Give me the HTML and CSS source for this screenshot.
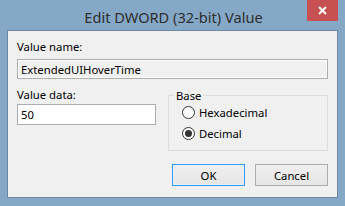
FILE: index.html
```html
<!DOCTYPE html>
<html lang="en">
<head>
    <meta charset="UTF-8">
    <title>Edit DWORD (32-bit) Value</title>
    <link rel="stylesheet" href="styles.css">
</head>
<body>
    <div class="window">
        <div class="titlebar">
            <div class="title">Edit DWORD (32-bit) Value</div>
            <div class="close">
                <svg width="9" height="9" viewBox="0 0 9 9">
                    <path d="M1 1 L8 8 M8 1 L1 8" stroke="#ffffff" stroke-width="2" fill="none"/>
                </svg>
            </div>
        </div>

        <div class="client">
            <label class="label" for="valueName">Value name:</label>
            <input type="text" id="valueName" class="textbox disabled" value="ExtendedUIHoverTime" disabled>

            <div class="row">
                <div class="data">
                    <label class="label" for="valueData">Value data:</label>
                    <input type="text" id="valueData" class="textbox" value="50">
                </div>
                <fieldset class="group">
                    <legend>Base</legend>
                    <label class="radio"><span class="dot"></span>Hexadecimal</label>
                    <label class="radio"><span class="dot checked"></span>Decimal</label>
                </fieldset>
            </div>

            <div class="buttons">
                <button class="btn default">OK</button>
                <button class="btn">Cancel</button>
            </div>
        </div>
    </div>
</body>
</html>
```

FILE: styles.css
```css
html, body {
    margin: 0;
    padding: 0;
}

body {
    width: 345px;
    height: 206px;
    overflow: hidden;
    font-family: "Noto Sans", "Open Sans", sans-serif;
    font-size: 11.3px;
    color: #000000;
}

.window {
    width: 345px;
    height: 206px;
    background: #85a8c6;
    box-sizing: border-box;
    border: 1px solid #85a8c6;
}

.titlebar {
    height: 29px;
    position: relative;
}

.title {
    text-align: center;
    font-size: 14.6px;
    color: #2e2e2e;
    padding-top: 6px;
    padding-left: 2px;
}

.close {
    position: absolute;
    top: -1px;
    right: 6px;
    width: 31px;
    height: 21px;
    background: #c75050;
    display: flex;
    align-items: center;
    justify-content: center;
}

.client {
    margin-left: 6px;
    width: 331px;
    height: 168px;
    box-sizing: border-box;
    border: 1px solid #6c89a3;
    background: #f0f0f0;
    padding: 8px 9px 0 9px;
}

.label {
    display: block;
    height: 15px;
    line-height: 15px;
}

.textbox {
    display: block;
    box-sizing: border-box;
    margin: 5px 0 0 0;
    padding: 0 3px;
    font-family: inherit;
    font-size: 11.3px;
    color: #000000;
    background: #ffffff;
    border: 1px solid #abadb3;
    outline: none;
}

#valueName {
    width: 311px;
    height: 20px;
}

.textbox.disabled {
    background: #f0f0f0;
    border-color: #adadad;
    box-shadow: inset 0 0 0 1px #ffffff;
}

.row {
    display: flex;
    align-items: flex-start;
    margin-top: 8px;
    gap: 12px;
}

.data {
    width: 139px;
}

#valueData {
    width: 139px;
    height: 21px;
    margin-top: 2px;
}

.group {
    margin: 2px 0 0 0;
    padding: 0 0 0 13px;
    width: 162px;
    height: 62px;
    box-sizing: border-box;
    border: 1px solid #dcdcdc;
}

.group legend {
    padding: 0 2px;
    margin-left: -8px;
    line-height: 13px;
}

.radio {
    display: flex;
    align-items: center;
    height: 21px;
    gap: 4px;
}

.dot {
    width: 13px;
    height: 13px;
    box-sizing: border-box;
    border: 1px solid #333333;
    border-radius: 50%;
    background: #ffffff;
    display: flex;
    align-items: center;
    justify-content: center;
}

.dot.checked::after {
    content: "";
    width: 7px;
    height: 7px;
    border-radius: 50%;
    background: #333333;
}

.buttons {
    display: flex;
    justify-content: flex-end;
    gap: 10px;
    margin-top: 13px;
}

.btn {
    width: 73px;
    height: 22px;
    box-sizing: border-box;
    font-family: inherit;
    font-size: 11.3px;
    color: #000000;
    background: linear-gradient(#efefef, #e5e5e5);
    border: 1px solid #acacac;
    padding: 0;
}

.btn.default {
    border-color: #3399ff;
    box-shadow: inset 0 0 0 1px #e4f1fc;
}
```
